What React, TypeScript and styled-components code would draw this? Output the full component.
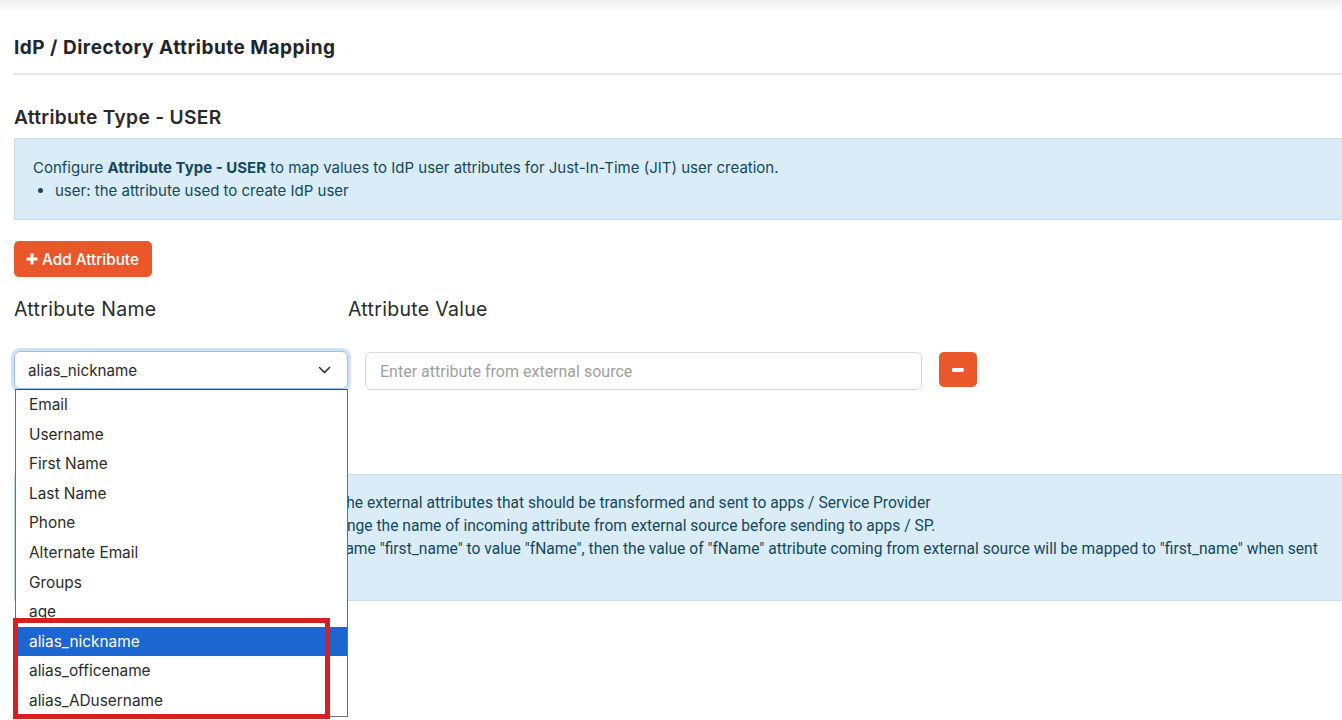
import React from 'react'
import styled, { createGlobalStyle } from 'styled-components'

const GlobalStyle = createGlobalStyle`
  html, body {
    margin: 0;
    padding: 0;
    background: #ffffff;
    overflow: hidden;
  }
  body {
    font-family: Inter, "Open Sans", sans-serif;
    color: #212529;
  }
`

const Page = styled.div`
  width: 1342px;
  height: 720px;
  overflow: hidden;
  background: linear-gradient(#eeeeee 0px, #ffffff 12px);
`

const Content = styled.div`
  padding-left: 14px;
  margin-right: -20px;
`

const PageTitle = styled.h2`
  margin: 0;
  padding: 37px 0 14px;
  font-size: 19px;
  font-weight: 700;
  line-height: 22px;
  letter-spacing: 0.5px;
  border-bottom: 2px solid #e5e5e5;
`

const SectionTitle = styled.h3`
  margin: 0;
  padding: 31px 0 10px;
  font-size: 19.2px;
  font-weight: 600;
  line-height: 22px;
  letter-spacing: 0.3px;
  color: #2a2a2a;
`

const InfoBox = styled.div<{ $roboto?: boolean; $height: number }>`
  box-sizing: border-box;
  height: ${({ $height }) => $height}px;
  background: #d9ecf7;
  border: 1px solid #c4e0ef;
  border-right: none;
  padding: ${({ $roboto }) => ($roboto ? '17px 38px 17px 18px' : '17px 18px')};
  color: #14495c;
  font-family: ${({ $roboto }) => ($roboto ? 'Roboto, "Liberation Sans", sans-serif' : 'Inter, "Open Sans", sans-serif')};
  font-size: ${({ $roboto }) => ($roboto ? '15.6px' : '15px')};
  line-height: 23px;
  p {
    margin: 0;
  }
  b {
    font-weight: 700;
  }
  ul {
    margin: 0;
    padding-left: 22px;
  }
`

const AddButton = styled.button`
  display: inline-flex;
  align-items: center;
  gap: 4px;
  margin-top: 21px;
  height: 36px;
  padding: 0 13px 0 12px;
  border: none;
  border-radius: 5px;
  background: #e9572b;
  color: #ffffff;
  font-family: Inter, "Open Sans", sans-serif;
  font-size: 15.3px;
  font-weight: 500;
`

const LabelRow = styled.div`
  display: flex;
  padding-top: 20px;
  font-size: 19.5px;
  letter-spacing: 0.3px;
  line-height: 24px;
  color: #2b2b2b;
`

const Label = styled.div<{ $width: number }>`
  width: ${({ $width }) => $width}px;
`

const FieldRow = styled.div`
  display: flex;
  align-items: flex-start;
  gap: 17px;
  margin-top: 30px;
`

const SelectWrap = styled.div`
  position: relative;
  width: 334px;
`

const SelectBox = styled.div`
  box-sizing: border-box;
  height: 38px;
  display: flex;
  align-items: center;
  justify-content: space-between;
  padding: 0 16px 0 13px;
  border: 1px solid #9cc0ee;
  border-radius: 6px;
  box-shadow: 0 0 0 3px rgba(120, 170, 235, 0.35);
  font-size: 15.2px;
  color: #2b2b2b;
`

const OptionList = styled.ul`
  position: absolute;
  top: 38px;
  left: 1px;
  width: 331px;
  margin: 0;
  padding: 0;
  list-style: none;
  background: #ffffff;
  border: 1px solid #6f6f6f;
  border-top: 1px solid #4a4a4a;
  z-index: 5;
`

const Option = styled.li<{ $selected?: boolean }>`
  height: 29.6px;
  line-height: 29.6px;
  padding-left: 13px;
  font-size: 15.4px;
  color: ${({ $selected }) => ($selected ? '#ffffff' : '#2b2b2b')};
  background: ${({ $selected }) => ($selected ? '#1b66d0' : 'transparent')};
`

const Highlight = styled.div`
  position: absolute;
  top: 267px;
  left: -1px;
  width: 317px;
  height: 101px;
  box-sizing: border-box;
  border: 5px solid #d41f26;
  z-index: 6;
  pointer-events: none;
`

const TextInput = styled.input`
  box-sizing: border-box;
  width: 557px;
  height: 38px;
  margin-top: 1px;
  padding: 0 14px;
  border: 1px solid #d9d9d9;
  border-radius: 6px;
  font-family: Roboto, "Liberation Sans", sans-serif;
  font-size: 16px;
  color: #333;
  &::placeholder {
    color: #a0a0a0;
  }
`

const RemoveButton = styled.button`
  display: flex;
  align-items: center;
  justify-content: center;
  width: 38px;
  height: 35px;
  margin-top: 1px;
  border: none;
  border-radius: 5px;
  background: #e9572b;
`

const MinusBar = styled.span`
  display: block;
  width: 12px;
  height: 4px;
  border-radius: 1px;
  background: #ffffff;
`

const SecondBox = styled.div`
  margin-top: 84px;
`

const options = [
  'Email',
  'Username',
  'First Name',
  'Last Name',
  'Phone',
  'Alternate Email',
  'Groups',
  'age',
  'alias_nickname',
  'alias_officename',
  'alias_ADusername',
]

function Chevron() {
  return (
    <svg width="13" height="8" viewBox="0 0 13 8" fill="none">
      <path d="M1.5 1.5 6.5 6.5 11.5 1.5" stroke="#333" strokeWidth="1.6" strokeLinecap="round" strokeLinejoin="round" />
    </svg>
  )
}

function PlusIcon() {
  return (
    <svg width="12" height="12" viewBox="0 0 12 12">
      <path d="M4.5 0.5h3v4h4v3h-4v4h-3v-4h-4v-3h4z" fill="#ffffff" />
    </svg>
  )
}

export default function App() {
  const selected = 'alias_nickname'
  return (
    <Page>
      <GlobalStyle />
      <Content>
        <PageTitle>IdP / Directory Attribute Mapping</PageTitle>
        <SectionTitle>Attribute Type - USER</SectionTitle>
        <InfoBox $height={82}>
          <p>
            Configure <b>Attribute Type - USER</b> to map values to IdP user attributes for Just-In-Time (JIT) user creation.
          </p>
          <ul>
            <li>user: the attribute used to create IdP user</li>
          </ul>
        </InfoBox>
        <AddButton>
          <PlusIcon />
          Add Attribute
        </AddButton>
        <LabelRow>
          <Label $width={334}>Attribute Name</Label>
          <Label $width={200}>Attribute Value</Label>
        </LabelRow>
        <FieldRow>
          <SelectWrap>
            <SelectBox>
              <span>{selected}</span>
              <Chevron />
            </SelectBox>
            <OptionList>
              {options.map((o) => (
                <Option key={o} $selected={o === selected}>
                  {o}
                </Option>
              ))}
            </OptionList>
            <Highlight />
          </SelectWrap>
          <TextInput placeholder="Enter attribute from external source" />
          <RemoveButton>
            <MinusBar />
          </RemoveButton>
        </FieldRow>
        <SecondBox>
          <InfoBox $roboto $height={127}>
            <p>Configure custom Attribute Mapping to map the external attributes that should be transformed and sent to apps / Service Provider</p>
            <p>Attribute Name: its field name so you can change the name of incoming attribute from external source before sending to apps / SP.</p>
            <p>For example, if you set the custom attribute name "first_name" to value "fName", then the value of "fName" attribute coming from external source will be mapped to "first_name" when sent to apps / SP.</p>
          </InfoBox>
        </SecondBox>
      </Content>
    </Page>
  )
}
